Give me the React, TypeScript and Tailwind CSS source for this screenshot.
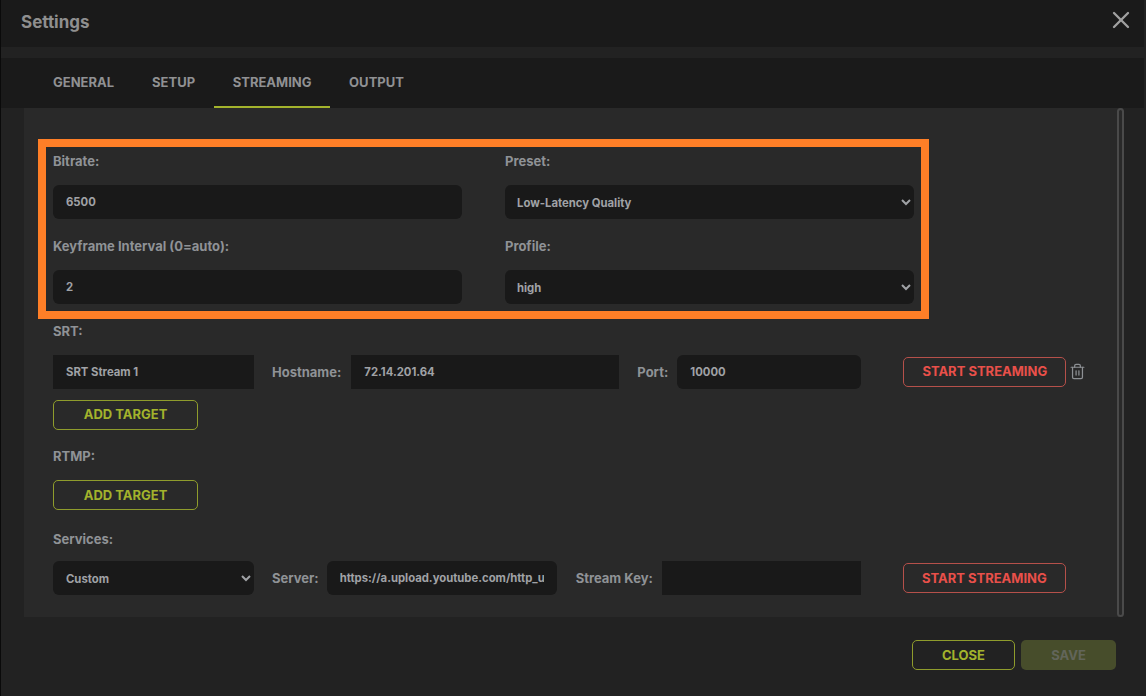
import { X, Trash2 } from "lucide-react";

const font = { fontFamily: "Inter, 'Liberation Sans', sans-serif" };

function Label({ children, className = "" }: { children: React.ReactNode; className?: string }) {
  return <span className={`text-[13px] leading-4 font-bold text-[#8f9296] whitespace-nowrap ${className}`}>{children}</span>;
}

function Field({ value, className = "" }: { value: string; className?: string }) {
  return (
    <input
      readOnly
      value={value}
      className={`h-[34px] bg-[#191919] px-[13px] text-[11.3px] font-bold text-[#a0a2a6] outline-none ${className}`}
    />
  );
}

function Select({ value, className = "pl-2" }: { value: string; className?: string }) {
  return (
    <select
      value={value}
      onChange={() => {}}
      className={`h-[34px] rounded-md bg-[#191919] pr-1 pt-[1px] text-[11.3px] font-bold text-[#a0a2a6] outline-none ${className}`}
    >
      <option>{value}</option>
    </select>
  );
}

function OutlineButton({ children, tone, className = "" }: { children: React.ReactNode; tone: "olive" | "red"; className?: string }) {
  const c = tone === "olive" ? "border-[#8f9c2c] text-[#a3b32c]" : "border-[#b5504a] text-[#e9504a]";
  return (
    <button className={`h-[30px] rounded-[5px] border text-[13px] font-bold ${c} ${className}`}>{children}</button>
  );
}

function Tab({ children, active }: { children: string; active?: boolean }) {
  return (
    <div className={`flex h-full items-center justify-center border-y-2 border-t-transparent px-[18px] text-[13px] font-bold text-[#909193] ${active ? "w-[116px] border-b-[#a3b32c]" : "border-b-transparent first:pl-[19px]"}`}>
      {children}
    </div>
  );
}

export default function App() {
  return (
    <div style={font} className="flex h-[696px] w-[1146px] flex-col overflow-hidden border-l border-[#0a0a0a] bg-[#222222] pr-[2px]">
      <header className="flex h-[47px] shrink-0 items-start justify-between bg-[#1a1a1a] pl-[20px] pr-[9px]">
        <h1 className="pt-[12px] text-[17px] leading-5 font-bold text-[#8f8f8f]">Settings</h1>
        <X className="mt-[6px] h-7 w-7 text-[#a0a0a0]" strokeWidth={2} />
      </header>
      <div className="h-[11px] shrink-0" />
      <nav className="flex h-[50px] shrink-0 items-center bg-[#1a1a1a] pl-[33px]">
        <Tab>GENERAL</Tab>
        <div className="w-[2px]" />
        <Tab>SETUP</Tab>
        <div className="w-[1px]" />
        <Tab active>STREAMING</Tab>
        <div className="w-[1px]" />
        <Tab>OUTPUT</Tab>
      </nav>
      <div className="flex h-[509px] shrink-0 pl-[23px] pr-[21px]">
        <main className="relative min-w-0 flex-1 bg-[#292929] pl-[14px] pt-[31px]">
          <section className="box-border grid h-[180px] w-[891px] grid-cols-[409px_409px] content-start gap-x-[43px] border-[8px] border-[#ff7f27] pl-[7px]">
            <div className="flex h-[38px] items-start pt-[6px]"><Label>Bitrate:</Label></div>
            <div className="flex h-[38px] items-start pt-[6px]"><Label>Preset:</Label></div>
            <Field value="6500" className="rounded-md" />
            <Select value="Low-Latency Quality" />
            <div className="flex h-[51px] items-end pb-[16px]"><Label>Keyframe Interval (0=auto):</Label></div>
            <div className="flex h-[51px] items-end pb-[16px]"><Label>Profile:</Label></div>
            <Field value="2" className="rounded-md" />
            <Select value="high" />
          </section>

          <div className="pl-[15px]">
            <div className="-mt-[1px] h-[16px]"><Label>SRT:</Label></div>
            <div className="mt-[21px] flex h-[34px] items-center">
              <Field value="SRT Stream 1" className="w-[201px]" />
              <Label className="ml-[18px]">Hostname:</Label>
              <Field value="72.14.201.64" className="ml-[10px] w-[268px]" />
              <Label className="ml-[18px]">Port:</Label>
              <Field value="10000" className="ml-[9px] w-[184px] rounded-md" />
              <OutlineButton tone="red" className="ml-[42px] w-[163px]">START STREAMING</OutlineButton>
              <Trash2 className="-mt-[2px] ml-[3px] h-[17px] w-[17px] text-[#8d9094]" strokeWidth={1.75} />
            </div>
            <OutlineButton tone="olive" className="mt-[11px] block w-[145px] border-[#7f8a2c]">ADD TARGET</OutlineButton>
            <div className="mt-[13px] h-[16px]"><Label>RTMP:</Label></div>
            <OutlineButton tone="olive" className="mt-[21px] block w-[145px] pt-[1px]">ADD TARGET</OutlineButton>
            <div className="mt-[16px] h-[16px]"><Label>Services:</Label></div>
            <div className="mt-[19px] flex h-[34px] items-center">
              <Select value="Custom" className="w-[201px] pl-[9px]" />
              <Label className="ml-[18px]">Server:</Label>
              <Field value="https://a.upload.youtube.com/http_upload" className="ml-[8px] w-[230px] rounded-md" />
              <Label className="ml-[19px]">Stream Key:</Label>
              <Field value="" className="ml-[9px] w-[199px]" />
              <OutlineButton tone="red" className="ml-[42px] w-[163px] pt-[1px]">START STREAMING</OutlineButton>
            </div>
          </div>
          <div className="absolute bottom-0 right-[-1px] top-0 w-[7px] rounded-full border-2 border-[#4a4a4a]" />
        </main>
      </div>
      <footer className="flex flex-1 items-start justify-end gap-[6px] pr-[28px] pt-[23px]">
        <OutlineButton tone="olive" className="w-[103px] pt-[1px]">CLOSE</OutlineButton>
        <button className="h-[30px] w-[95px] rounded-[5px] bg-[#474d2b] pt-[1px] text-[13px] font-bold text-[#62655a]">SAVE</button>
      </footer>
    </div>
  );
}
